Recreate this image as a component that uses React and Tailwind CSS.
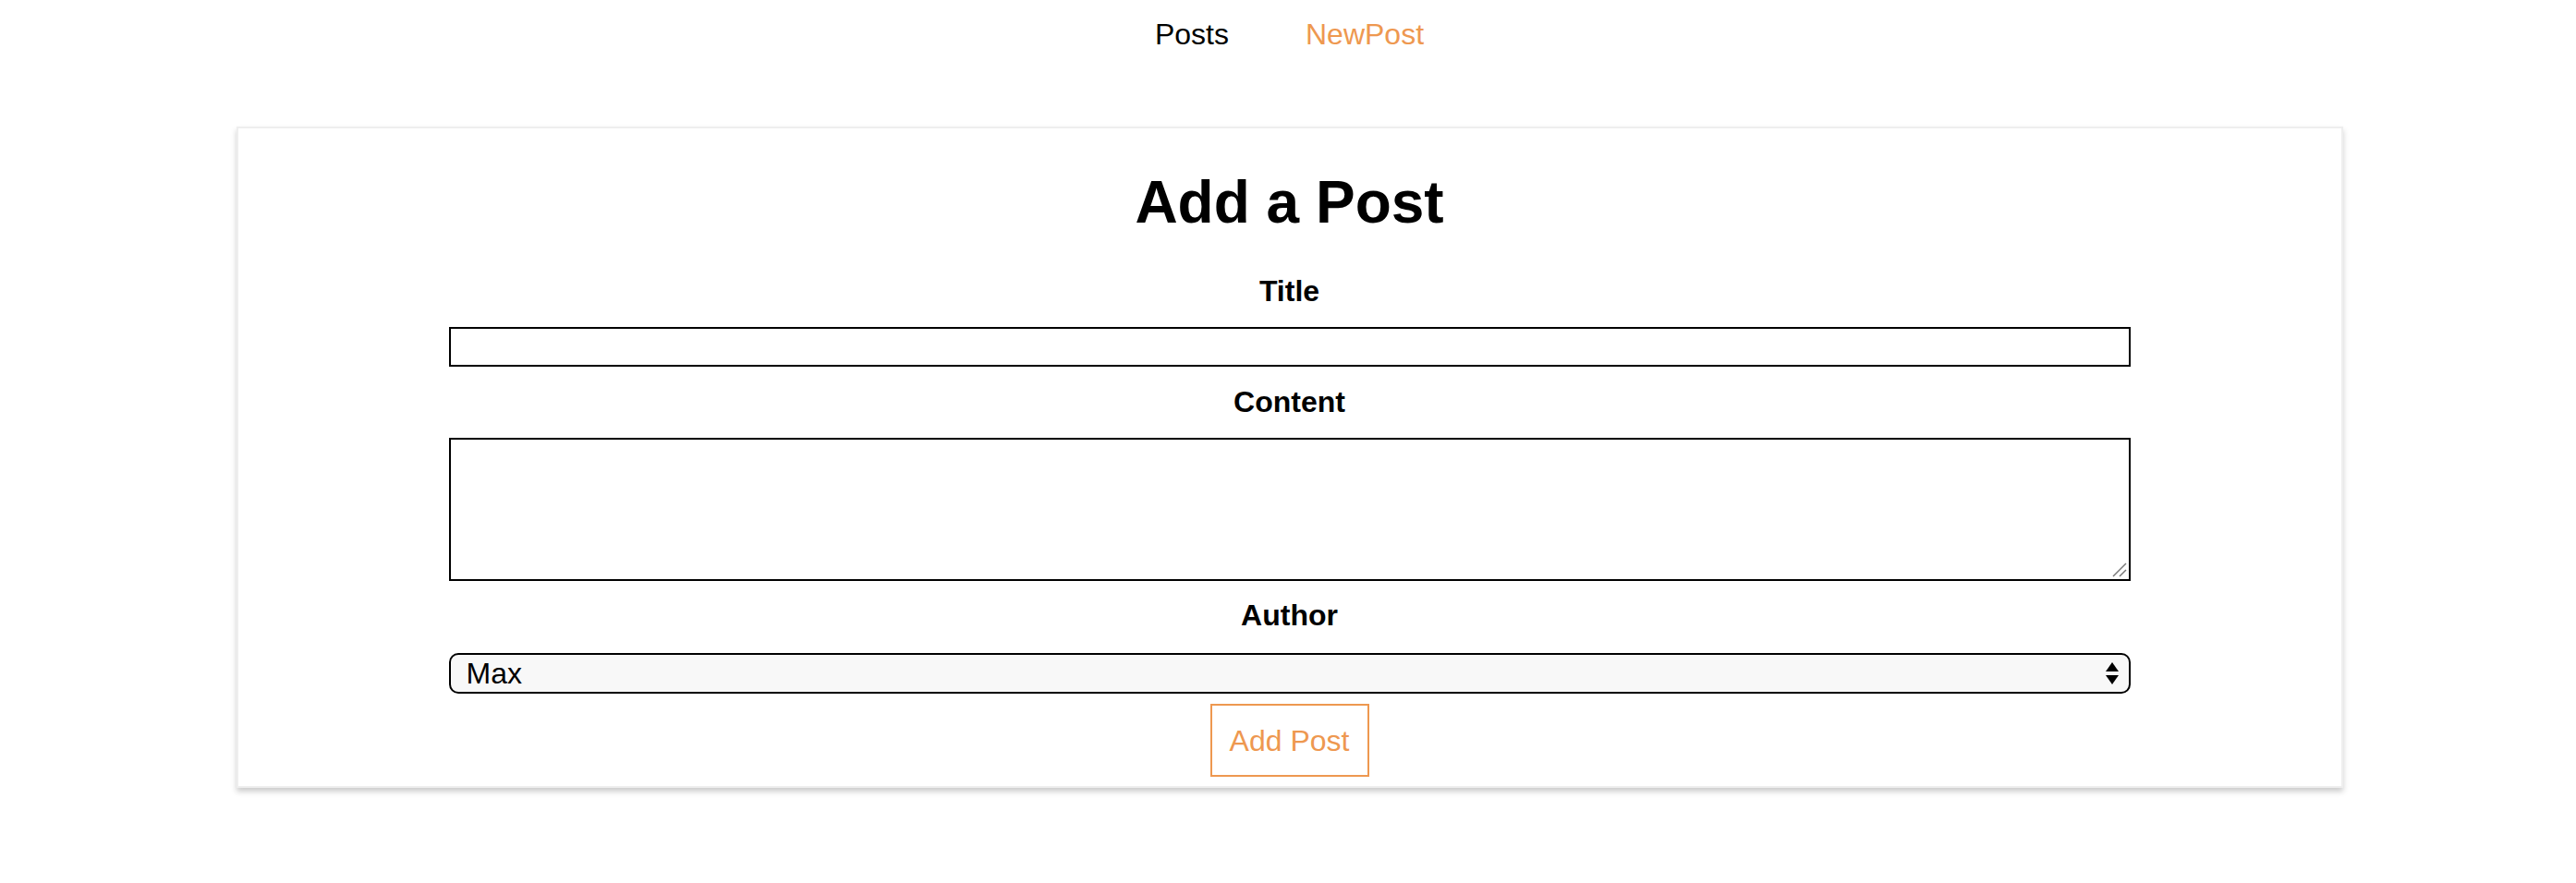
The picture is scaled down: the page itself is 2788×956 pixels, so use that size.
export default function App() {
  return (
    <div className="min-h-[956px] bg-white pl-[3px] font-['Liberation_Sans',Arial,sans-serif] text-black">
      <nav className="flex justify-center gap-[83px] pt-[17px] text-[32px] leading-[40px]">
        <a className="cursor-pointer text-black">Posts</a>
        <a className="cursor-pointer text-[#ee9850]">NewPost</a>
      </nav>

      <div className="mx-auto mt-[80px] w-[2280px] border-2 border-[#eee] bg-white pt-[44px] pb-[10px] text-center shadow-[0_4px_6px_#ccc]">
        <h1 className="text-[64px] font-bold leading-[72px]">Add a Post</h1>
        <form className="mx-auto flex w-[1820px] flex-col items-center" onSubmit={(e) => e.preventDefault()}>
          <label className="mt-[40px] text-[32px] font-bold leading-[40px]">Title</label>
          <input className="mt-[19px] block h-[43px] w-full border-2 border-black bg-white px-2 text-[32px] outline-none" />

          <label className="mt-[18px] text-[32px] font-bold leading-[40px]">Content</label>
          <div className="relative mt-[19px] w-full">
            <textarea className="block h-[155px] w-full resize-none border-2 border-black bg-white px-2 text-[32px] outline-none" />
            {/* resize grip */}
            <svg className="pointer-events-none absolute bottom-[4px] right-[4px]" width="16" height="16" viewBox="0 0 16 16">
              <line x1="15" y1="1" x2="1" y2="15" stroke="#777" strokeWidth="1.5" />
              <line x1="15" y1="8" x2="8" y2="15" stroke="#777" strokeWidth="1.5" />
            </svg>
          </div>

          <label className="mt-[17px] text-[32px] font-bold leading-[40px]">Author</label>
          <div className="relative mt-[21px] w-full">
            <select className="block h-[44px] w-full appearance-none rounded-[10px] border-2 border-black bg-[#f8f8f8] pl-[17px] text-left text-[32px] leading-[40px] outline-none">
              <option>Max</option>
              <option>Manu</option>
            </select>
            <svg className="pointer-events-none absolute right-[12px] top-[9px]" width="16" height="26" viewBox="0 0 16 26">
              <path d="M8 1 L15 11 L1 11 Z" fill="#000" />
              <path d="M1 15 L15 15 L8 25 Z" fill="#000" />
            </svg>
          </div>

          <button className="mt-[11px] h-[79px] w-[172px] border-2 border-[#ee9850] bg-white text-[32px] leading-[40px] text-[#ee9850]">
            Add Post
          </button>
        </form>
      </div>
    </div>
  )
}
